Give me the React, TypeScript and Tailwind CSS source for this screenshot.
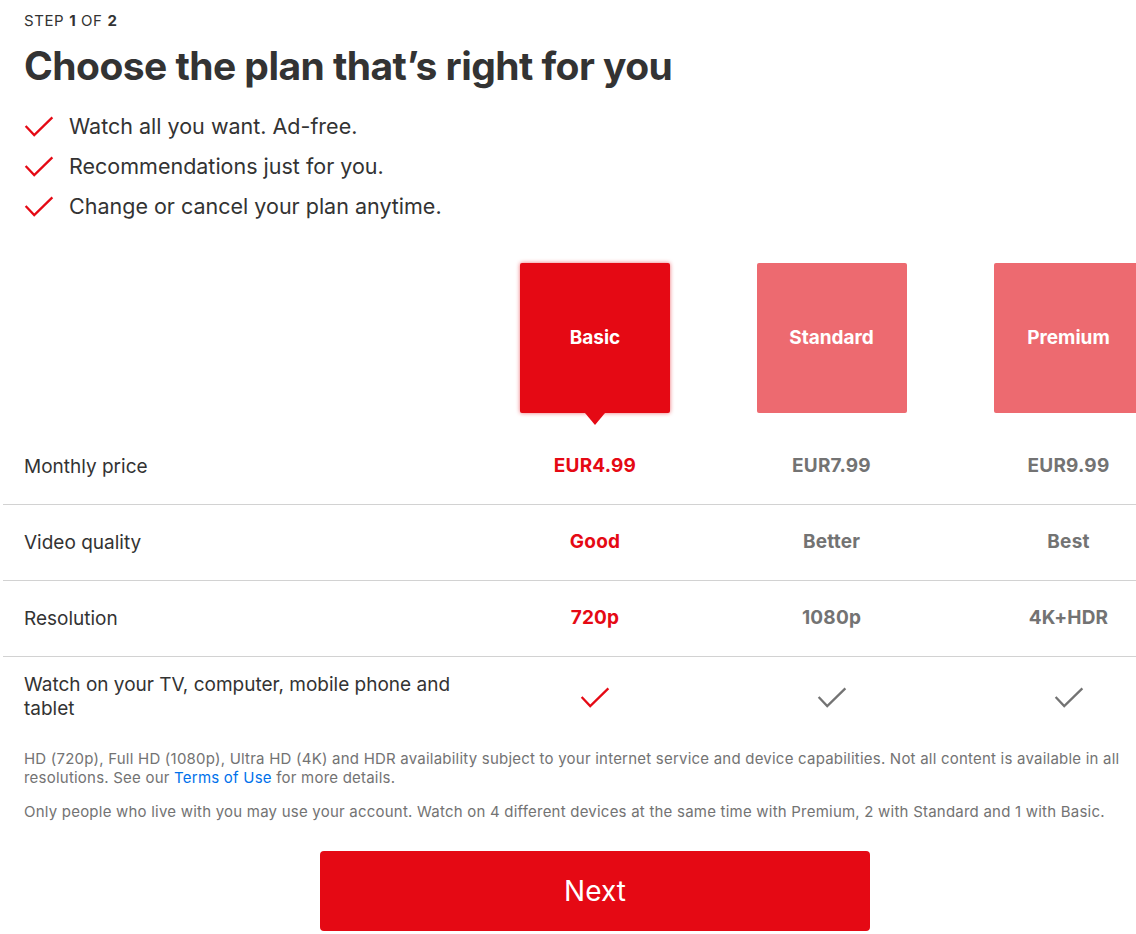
import React from 'react'

const plans = [
  { name: 'Basic', price: 'EUR4.99', quality: 'Good', resolution: '720p' },
  { name: 'Standard', price: 'EUR7.99', quality: 'Better', resolution: '1080p' },
  { name: 'Premium', price: 'EUR9.99', quality: 'Best', resolution: '4K+HDR' },
]

const perks = [
  'Watch all you want. Ad-free.',
  'Recommendations just for you.',
  'Change or cancel your plan anytime.',
]

function Check({ className }: { className?: string }) {
  return (
    <svg viewBox="0 0 30 22" className={className} fill="none" stroke="currentColor" strokeWidth="2.4">
      <path d="M1 10.5 L10 20 L29 1.5" />
    </svg>
  )
}

function Row({
  label,
  values,
  bordered = true,
}: {
  label: React.ReactNode
  values: React.ReactNode[]
  bordered?: boolean
}) {
  return (
    <div
      className={`grid grid-cols-[474px_236px_237px_237px] items-center ${
        bordered ? 'h-[76px] border-b border-[#d2d2d2]' : 'py-4'
      }`}
    >
      <div className="pl-[21px] pr-4 text-[19px] leading-6 text-[#333]">{label}</div>
      {values.map((v, i) => (
        <div
          key={i}
          className={`flex justify-center text-[19px] font-bold tracking-[0.2px] ${
            i === 0 ? 'text-[#e50914]' : 'text-[#737373]'
          }`}
        >
          {v}
        </div>
      ))}
    </div>
  )
}

export default function App() {
  return (
    <div className="w-[1136px] h-[934px] overflow-hidden bg-white font-['Inter',sans-serif] text-[#333]">
      <div className="px-6 pt-3">
        <div className="text-[15px] leading-[18px] tracking-[0.6px] text-[#333]">
          STEP <b>1</b> OF <b>2</b>
        </div>
        <h1 className="mt-[13px] text-[39px] font-bold leading-[46px] tracking-[-0.55px]">
          Choose the plan that’s right for you
        </h1>
        <ul className="mt-[25px] flex flex-col gap-4">
          {perks.map((p) => (
            <li key={p} className="flex items-center gap-[15px] text-[21.5px] leading-6">
              <Check className="h-[21px] w-[30px] text-[#e50914]" />
              {p}
            </li>
          ))}
        </ul>
      </div>

      <div className="ml-[3px] mt-[45px]">
        <div className="grid grid-cols-[474px_236px_237px_237px] pb-4">
          <div />
          {plans.map((p, i) => (
            <div key={p.name} className="flex justify-center">
              <div
                className={`relative flex h-[150px] w-[150px] items-center justify-center rounded-[2px] text-[19px] font-bold text-white ${
                  i === 0 ? 'bg-[#e50914] shadow-[0_0_4px_rgba(229,9,20,0.6)]' : 'bg-[#ed6a70]'
                }`}
              >
                {p.name}
                {i === 0 && (
                  <div className="absolute left-1/2 top-full h-0 w-0 -translate-x-1/2 border-x-[10px] border-t-[12px] border-x-transparent border-t-[#e50914]" />
                )}
              </div>
            </div>
          ))}
        </div>

        <Row label="Monthly price" values={plans.map((p) => p.price)} />
        <Row label="Video quality" values={plans.map((p) => p.quality)} />
        <Row label="Resolution" values={plans.map((p) => p.resolution)} />
        <Row
          bordered={false}
          label="Watch on your TV, computer, mobile phone and tablet"
          values={plans.map((_, i) => (
            <Check
              key={i}
              className={`h-[21px] w-[30px] ${i === 0 ? 'text-[#e50914]' : 'text-[#737373]'}`}
            />
          ))}
        />
      </div>

      <div className="pl-6 pr-1 pt-[12px] text-[15px] leading-[19px] tracking-[0.22px] text-[#737373]">
        <p>
          HD (720p), Full HD (1080p), Ultra HD (4K) and HDR availability subject to your internet service and
          device capabilities. Not all content is available in all resolutions. See our{' '}
          <a className="text-[#0071eb]">Terms of Use</a> for more details.
        </p>
        <p className="mt-[15px]">
          Only people who live with you may use your account. Watch on 4 different devices at the same time with
          Premium, 2 with Standard and 1 with Basic.
        </p>
      </div>

      <div className="pl-[320px] pt-[30px]">
        <button className="h-[80px] w-[550px] rounded-[4px] bg-[#e50914] text-[28px] text-white">Next</button>
      </div>
    </div>
  )
}
